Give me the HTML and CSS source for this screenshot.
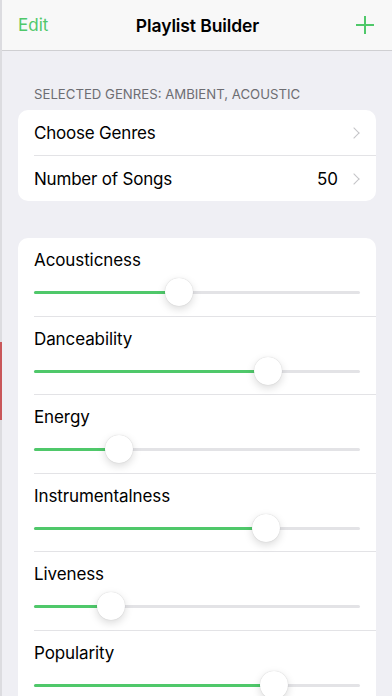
FILE: index.html
```html
<!DOCTYPE html>
<html lang="en">
<head>
    <meta charset="UTF-8">
    <meta name="viewport" content="width=device-width, initial-scale=1.0">
    <title>Playlist Builder</title>
    <link rel="stylesheet" href="styles.css">
</head>
<body>
    <div class="frame">
        <div class="edge">
            <div class="edge-red"></div>
        </div>

        <div class="screen">
            <header class="navbar">
                <span class="nav-btn">Edit</span>
                <span class="nav-title">Playlist Builder</span>
                <span class="nav-add">
                    <svg width="20" height="20" viewBox="0 0 20 20">
                        <path d="M10 1v18M1 10h18" stroke="#4fc86a" stroke-width="2" fill="none"/>
                    </svg>
                </span>
            </header>

            <div class="section-header">SELECTED GENRES: AMBIENT, ACOUSTIC</div>

            <div class="card">
                <div class="row">
                    <span class="row-label">Choose Genres</span>
                    <span class="chevron"></span>
                </div>
                <div class="row">
                    <span class="row-label">Number of Songs</span>
                    <span class="row-value">50</span>
                    <span class="chevron"></span>
                </div>
            </div>

            <div class="card sliders">
                <div class="slider-row">
                    <div class="slider-label">Acousticness</div>
                    <div class="slider"><div class="fill" style="width: 44.5%"></div><div class="thumb" style="left: 44.5%"></div></div>
                </div>
                <div class="slider-row">
                    <div class="slider-label">Danceability</div>
                    <div class="slider"><div class="fill" style="width: 71.8%"></div><div class="thumb" style="left: 71.8%"></div></div>
                </div>
                <div class="slider-row">
                    <div class="slider-label">Energy</div>
                    <div class="slider"><div class="fill" style="width: 26%"></div><div class="thumb" style="left: 26%"></div></div>
                </div>
                <div class="slider-row">
                    <div class="slider-label">Instrumentalness</div>
                    <div class="slider"><div class="fill" style="width: 71.2%"></div><div class="thumb" style="left: 71.2%"></div></div>
                </div>
                <div class="slider-row">
                    <div class="slider-label">Liveness</div>
                    <div class="slider"><div class="fill" style="width: 23.6%"></div><div class="thumb" style="left: 23.6%"></div></div>
                </div>
                <div class="slider-row">
                    <div class="slider-label">Popularity</div>
                    <div class="slider"><div class="fill" style="width: 73.6%"></div><div class="thumb" style="left: 73.6%"></div></div>
                </div>
            </div>
        </div>
    </div>
</body>
</html>
```

FILE: styles.css
```css
html, body {
    margin: 0;
    padding: 0;
}

body {
    font-family: Inter, "Liberation Sans", Arial, sans-serif;
    background: #efeff4;
    color: #000;
    width: 392px;
    height: 696px;
    overflow: hidden;
}

.frame {
    display: flex;
    height: 696px;
}

.edge {
    width: 2px;
    flex: none;
    background: #dcdce0;
    padding-top: 342px;
}

.edge-red {
    height: 78px;
    background: #c9575a;
}

.screen {
    flex: 1;
    min-width: 0;
}

.navbar {
    height: 50px;
    background: #f8f8f8;
    border-bottom: 1px solid #cfcfd2;
    display: grid;
    grid-template-columns: 1fr auto 1fr;
    align-items: center;
    padding: 0 17px 0 16px;
}

.nav-btn {
    color: #4fc86a;
    font-size: 17px;
}

.nav-title {
    font-size: 17.5px;
    font-weight: 600;
    letter-spacing: -0.1px;
    margin-left: 2px;
}

.nav-add {
    display: flex;
    justify-self: end;
    width: 20px;
    height: 20px;
}

.section-header {
    margin: 35px 0 8px 32px;
    font-size: 13.2px;
    color: #6d6d72;
}

.card {
    background: #fff;
    margin: 0 16px;
    border-radius: 10px;
    overflow: hidden;
}

.row {
    height: 45px;
    display: flex;
    align-items: center;
    padding-right: 18px;
    margin-left: 16px;
    font-size: 17px;
}

.row + .row {
    border-top: 1px solid #e3e3e6;
}

.row-label {
    flex: 1;
    letter-spacing: -0.2px;
}

.row-value {
    margin-right: 12px;
}

.chevron {
    width: 7px;
    height: 7px;
    border-right: 1.7px solid #c4c4c7;
    border-top: 1.7px solid #c4c4c7;
    transform: rotate(45deg);
}

.sliders {
    margin-top: 37px;
}

.slider-row {
    margin-left: 16px;
    height: 77.5px;
    padding-right: 16px;
}

.slider-row + .slider-row {
    border-top: 1px solid #e3e3e6;
}

.slider-label {
    font-size: 17px;
    padding-top: 12px;
    height: 24px;
    letter-spacing: -0.1px;
}

.slider {
    position: relative;
    margin-top: 17px;
    height: 3px;
    border-radius: 2px;
    background: #e3e3e6;
}

.fill {
    height: 3px;
    border-radius: 2px;
    background: #4fc86a;
}

.thumb {
    position: absolute;
    top: -13px;
    width: 28px;
    height: 28px;
    margin-left: -14px;
    border-radius: 50%;
    background: #fff;
    box-shadow: 0 3px 8px rgba(0, 0, 0, 0.15), 0 0 1px rgba(0, 0, 0, 0.2);
}
```
